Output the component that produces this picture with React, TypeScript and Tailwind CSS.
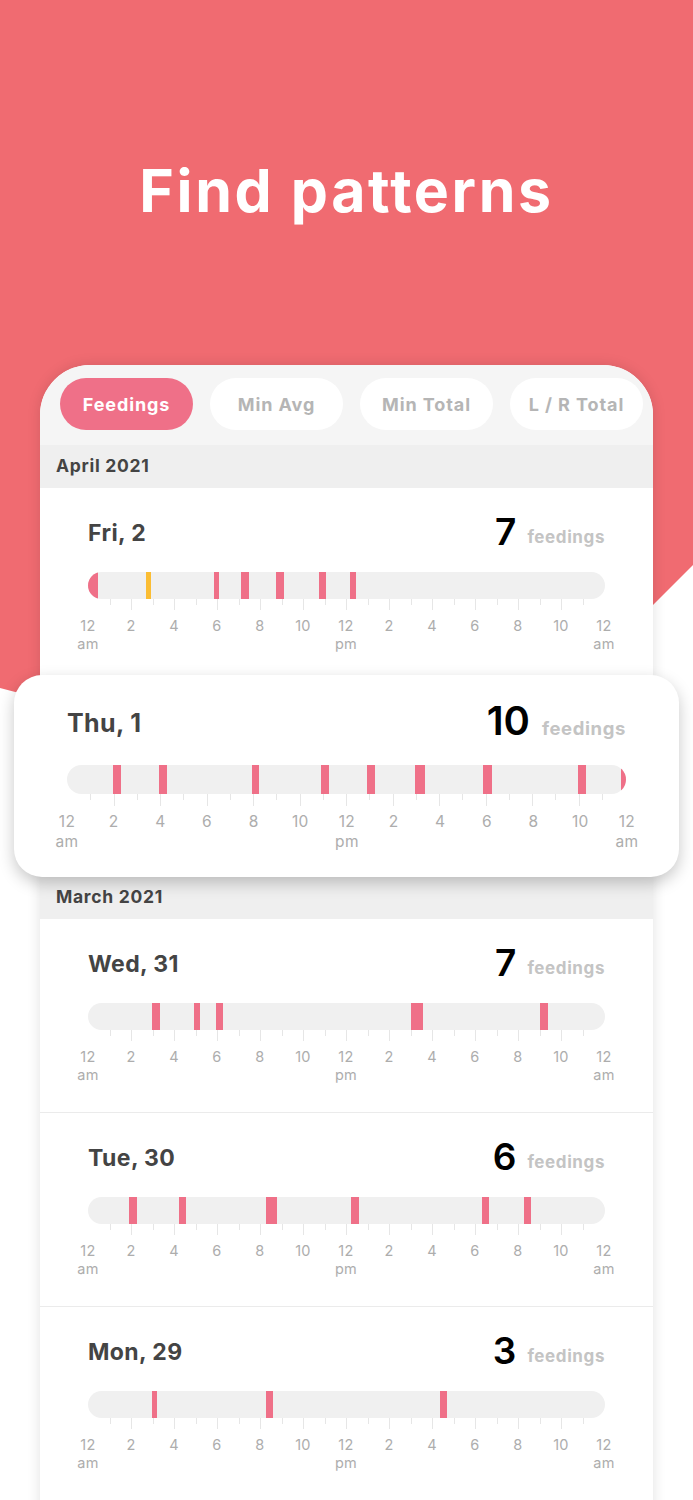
import React from "react";

type Seg = [number, number, ("p" | "y")?];

interface Day {
  title: string;
  count: number;
  segs: Seg[];
}

const hoursLabels = ["12", "2", "4", "6", "8", "10", "12", "2", "4", "6", "8", "10", "12"];
const subLabels: Record<number, string> = { 0: "am", 6: "pm", 12: "am" };

function Bar({ segs, big }: { segs: Seg[]; big: boolean }) {
  return (
    <div
      className={
        big
          ? "relative mt-[24px] h-[29px] w-full overflow-hidden rounded-full bg-[#f0f0f0]"
          : "relative mt-[22px] h-[27px] w-full overflow-hidden rounded-full bg-[#f0f0f0]"
      }
    >
      {segs.map(([a, b, c], i) => (
        <div
          key={i}
          className={c === "y" ? "absolute top-0 bottom-0 bg-[#fbbd33]" : "absolute top-0 bottom-0 bg-[#ef7088]"}
          style={{ left: `${(a / 24) * 100}%`, width: `${((b - a) / 24) * 100}%` }}
        />
      ))}
    </div>
  );
}

function Ticks({ big }: { big: boolean }) {
  const items = Array.from({ length: 25 }, (_, i) => i);
  return (
    <div className={big ? "flex h-[12px] w-full items-start justify-between" : "flex h-[11px] w-full items-start justify-between"}>
      {items.map((i) => {
        const hidden = i === 0 || i === 24;
        const even = i % 2 === 0;
        let cls = "w-px bg-[#e6e6e6] ";
        if (big) cls += even ? "h-[12px]" : "h-[6px]";
        else cls += even ? "h-[11px]" : "h-[6px]";
        if (hidden) cls += " opacity-0";
        return <div key={i} className={cls} />;
      })}
    </div>
  );
}

function Labels({ big }: { big: boolean }) {
  return (
    <div
      className={
        big
          ? "-mx-[23.33px] mt-[6px] flex text-[15.5px] leading-[20px] tracking-[0.3px] text-[#adadad]"
          : "-mx-[21.5px] mt-[7px] flex text-[14.5px] leading-[18px] tracking-[0.3px] text-[#adadad]"
      }
    >
      {hoursLabels.map((l, i) => (
        <div key={i} className={big ? "flex w-[46.67px] shrink-0 flex-col items-center" : "flex w-[43px] shrink-0 flex-col items-center"}>
          <span>{l}</span>
          <span>{subLabels[i] ?? "\u00a0"}</span>
        </div>
      ))}
    </div>
  );
}

function Row({ day, big = false }: { day: Day; big?: boolean }) {
  return (
    <div className={big ? "px-[53px] pt-[26px] pb-[25px]" : "border-b border-[#ebebeb] px-[48px] pt-[25px] pb-[28px]"}>
      <div className="flex items-end justify-between">
        <span
          className={
            big
              ? "mb-[5px] text-[25px] font-bold leading-none tracking-[0.4px] text-[#444444]"
              : "mb-[5px] text-[23px] font-bold leading-none tracking-[0.4px] text-[#444444]"
          }
        >
          {day.title}
        </span>
        <div className="flex items-end">
          <span className={big ? "text-[40px] font-semibold leading-none text-black" : "text-[37px] font-semibold leading-none text-black"}>
            {day.count}
          </span>
          <span
            className={
              big
                ? "mb-[4px] ml-[12px] text-[18.5px] font-bold leading-none tracking-[0.6px] text-[#c4c4c4]"
                : "mb-[4px] ml-[11px] text-[17px] font-bold leading-none tracking-[0.6px] text-[#c4c4c4]"
            }
          >
            feedings
          </span>
        </div>
      </div>
      <Bar segs={day.segs} big={big} />
      <Ticks big={big} />
      <Labels big={big} />
    </div>
  );
}

function MonthHeader({ label }: { label: string }) {
  return (
    <div className="flex h-[43px] items-center bg-[#efefef] px-[16px]">
      <span className="text-[17.5px] font-bold tracking-[0.7px] text-[#444444]">{label}</span>
    </div>
  );
}

const fri: Day = {
  title: "Fri, 2",
  count: 7,
  segs: [
    [0, 0.47],
    [2.7, 2.93, "y"],
    [5.86, 6.1],
    [7.1, 7.49],
    [8.74, 9.12],
    [10.74, 11.07],
    [12.14, 12.42],
  ],
};
const thu: Day = {
  title: "Thu, 1",
  count: 10,
  segs: [
    [1.97, 2.31],
    [3.94, 4.29],
    [7.93, 8.23],
    [10.89, 11.23],
    [12.9, 13.24],
    [14.92, 15.35],
    [17.87, 18.26],
    [21.94, 22.3],
    [23.79, 24],
  ],
};
const wed: Day = {
  title: "Wed, 31",
  count: 7,
  segs: [
    [2.98, 3.35],
    [4.9, 5.21],
    [5.95, 6.28],
    [14.98, 15.53],
    [20.98, 21.35],
  ],
};
const tue: Day = {
  title: "Tue, 30",
  count: 6,
  segs: [
    [1.9, 2.28],
    [4.23, 4.56],
    [8.28, 8.79],
    [12.23, 12.56],
    [18.28, 18.6],
    [20.23, 20.56],
  ],
};
const mon: Day = {
  title: "Mon, 29",
  count: 3,
  segs: [
    [2.98, 3.21],
    [8.28, 8.6],
    [16.33, 16.65],
  ],
};

const tabs = ["Feedings", "Min Avg", "Min Total", "L / R Total"];

export default function App() {
  return (
    <div className="relative h-[1500px] w-full overflow-hidden bg-white font-[Inter,sans-serif]">
      <svg className="absolute left-0 top-0 h-[800px] w-full" viewBox="0 0 693 800" preserveAspectRatio="none">
        <path d="M0 0 H693 V565 L653 605 C 500 760, 200 740, 0 688 Z" fill="#f06b71" />
      </svg>
      <div className="relative flex flex-col items-center pt-[161px]">
        <h1 className="text-[59px] font-bold leading-none tracking-[2.6px] text-white">Find patterns</h1>
        <div className="mt-[145px] w-[613px] rounded-t-[50px] bg-white pb-[200px] shadow-[0_0_14px_rgba(0,0,0,0.12)]">
          <div className="flex gap-[17px] rounded-t-[50px] bg-[#f5f5f5] pt-[13px] pb-[15px] pl-[20px]">
            {tabs.map((t, i) => (
              <div
                key={t}
                className={
                  i === 0
                    ? "flex h-[52px] w-[133px] shrink-0 items-center justify-center rounded-full bg-[#ef7088] text-[18px] font-bold tracking-[0.9px] text-white"
                    : "flex h-[52px] w-[133px] shrink-0 items-center justify-center rounded-full bg-white text-[18px] font-bold tracking-[0.9px] text-[#b5b5b5]"
                }
              >
                {t}
              </div>
            ))}
          </div>
          <MonthHeader label="April 2021" />
          <Row day={fri} />
          <div className="relative z-10 -mx-[26px] -mt-[7px] -mb-[1px] rounded-[28px] bg-white shadow-[0_6px_16px_rgba(0,0,0,0.22)]">
            <Row day={thu} big />
          </div>
          <MonthHeader label="March 2021" />
          <Row day={wed} />
          <Row day={tue} />
          <Row day={mon} />
        </div>
      </div>
    </div>
  );
}
